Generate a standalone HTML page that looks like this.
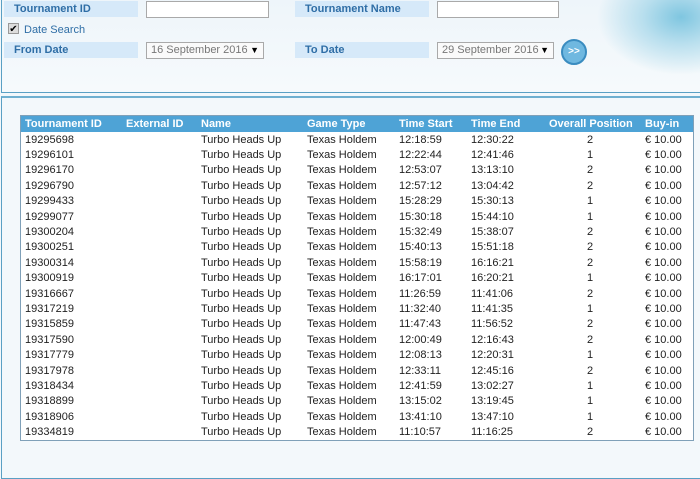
<!DOCTYPE html>
<html><head><style>
body{margin:0;width:700px;height:450px;overflow:hidden;background:#f3f8fb;font-family:"Liberation Sans",Arial,sans-serif;position:relative}
.a{position:absolute}
.top{left:1px;top:-2px;width:720px;height:93px;border:1px solid #5aa0c4;background:linear-gradient(#eef5fa,#f6fafc)}
.lab{position:absolute;height:16px;background:#d6e9f9;color:#2f6ea6;font-weight:bold;font-size:11px;line-height:16px;padding-left:10px;box-sizing:border-box}
.inp{position:absolute;height:17px;border:1px solid #a9a9a9;background:#fff;box-sizing:border-box}
.sel{position:absolute;height:17px;border:1px solid #a9a9a9;background:#fafafa;box-sizing:border-box;font-size:11px;color:#777;line-height:15px;padding-left:4px}
.sel span{position:absolute;right:4px;color:#000;font-size:9px}
.bot{left:1px;top:96px;width:720px;height:380px;border:1px solid #5aa0c4;border-top:2px solid #6fb0d0;background:#f3f8fb}
table{position:absolute;left:20px;top:115px;width:674px;border-collapse:collapse;font-size:11px;background:#fff;border:1px solid #7fa0b8}
th{background:#4ea3d6;color:#fff;text-align:left;height:16px;padding:0 0 0 4px;font-size:11px}
td{height:15.4px;padding:0 0 0 4px;color:#222;line-height:14px}
td:nth-child(7){text-align:center;padding-right:10px}
</style></head><body>
<div class="a top"></div>
<div class="a" style="left:590px;top:-10px;width:130px;height:90px;background:radial-gradient(ellipse at 70% 30%,#7fc6e0 0%,#b9dfee 30%,rgba(230,242,248,0) 65%)"></div>
<div class="lab" style="left:4px;top:1px;width:134px">Tournament ID</div>
<div class="inp" style="left:146px;top:1px;width:123px"></div>
<div class="lab" style="left:295px;top:1px;width:134px">Tournament Name</div>
<div class="inp" style="left:437px;top:1px;width:122px"></div>
<div class="a" style="left:8px;top:23px;width:11px;height:11px;border:1px solid #999;background:#ddd;font-size:10px;line-height:11px;text-align:center;box-sizing:border-box">✔</div>
<div class="a" style="left:24px;top:24px;font-size:11px;color:#2f6ea6">Date Search</div>
<div class="lab" style="left:4px;top:42px;width:134px">From Date</div>
<div class="sel" style="left:146px;top:42px;width:118px">16 September 2016<span>▼</span></div>
<div class="lab" style="left:295px;top:42px;width:134px">To Date</div>
<div class="sel" style="left:437px;top:42px;width:117px">29 September 2016<span>▼</span></div>
<div class="a" style="left:561px;top:39px;width:22px;height:22px;border-radius:50%;border:2px solid #3a8cc0;background:#6fb8e0;color:#fff;font-size:10px;font-weight:bold;text-align:center;line-height:22px">&gt;&gt;</div>
<div class="a bot"></div>
<table>
<tr><th style="width:97px">Tournament ID</th><th style="width:71px">External ID</th><th style="width:102px">Name</th><th style="width:88px">Game Type</th><th style="width:68px">Time Start</th><th style="width:74px">Time End</th><th style="width:92px">Overall Position</th><th>Buy-in</th></tr>
<tr><td>19295698</td><td></td><td>Turbo Heads Up</td><td>Texas Holdem</td><td>12:18:59</td><td>12:30:22</td><td>2</td><td>€ 10.00</td></tr>
<tr><td>19296101</td><td></td><td>Turbo Heads Up</td><td>Texas Holdem</td><td>12:22:44</td><td>12:41:46</td><td>1</td><td>€ 10.00</td></tr>
<tr><td>19296170</td><td></td><td>Turbo Heads Up</td><td>Texas Holdem</td><td>12:53:07</td><td>13:13:10</td><td>2</td><td>€ 10.00</td></tr>
<tr><td>19296790</td><td></td><td>Turbo Heads Up</td><td>Texas Holdem</td><td>12:57:12</td><td>13:04:42</td><td>2</td><td>€ 10.00</td></tr>
<tr><td>19299433</td><td></td><td>Turbo Heads Up</td><td>Texas Holdem</td><td>15:28:29</td><td>15:30:13</td><td>1</td><td>€ 10.00</td></tr>
<tr><td>19299077</td><td></td><td>Turbo Heads Up</td><td>Texas Holdem</td><td>15:30:18</td><td>15:44:10</td><td>1</td><td>€ 10.00</td></tr>
<tr><td>19300204</td><td></td><td>Turbo Heads Up</td><td>Texas Holdem</td><td>15:32:49</td><td>15:38:07</td><td>2</td><td>€ 10.00</td></tr>
<tr><td>19300251</td><td></td><td>Turbo Heads Up</td><td>Texas Holdem</td><td>15:40:13</td><td>15:51:18</td><td>2</td><td>€ 10.00</td></tr>
<tr><td>19300314</td><td></td><td>Turbo Heads Up</td><td>Texas Holdem</td><td>15:58:19</td><td>16:16:21</td><td>2</td><td>€ 10.00</td></tr>
<tr><td>19300919</td><td></td><td>Turbo Heads Up</td><td>Texas Holdem</td><td>16:17:01</td><td>16:20:21</td><td>1</td><td>€ 10.00</td></tr>
<tr><td>19316667</td><td></td><td>Turbo Heads Up</td><td>Texas Holdem</td><td>11:26:59</td><td>11:41:06</td><td>2</td><td>€ 10.00</td></tr>
<tr><td>19317219</td><td></td><td>Turbo Heads Up</td><td>Texas Holdem</td><td>11:32:40</td><td>11:41:35</td><td>1</td><td>€ 10.00</td></tr>
<tr><td>19315859</td><td></td><td>Turbo Heads Up</td><td>Texas Holdem</td><td>11:47:43</td><td>11:56:52</td><td>2</td><td>€ 10.00</td></tr>
<tr><td>19317590</td><td></td><td>Turbo Heads Up</td><td>Texas Holdem</td><td>12:00:49</td><td>12:16:43</td><td>2</td><td>€ 10.00</td></tr>
<tr><td>19317779</td><td></td><td>Turbo Heads Up</td><td>Texas Holdem</td><td>12:08:13</td><td>12:20:31</td><td>1</td><td>€ 10.00</td></tr>
<tr><td>19317978</td><td></td><td>Turbo Heads Up</td><td>Texas Holdem</td><td>12:33:11</td><td>12:45:16</td><td>2</td><td>€ 10.00</td></tr>
<tr><td>19318434</td><td></td><td>Turbo Heads Up</td><td>Texas Holdem</td><td>12:41:59</td><td>13:02:27</td><td>1</td><td>€ 10.00</td></tr>
<tr><td>19318899</td><td></td><td>Turbo Heads Up</td><td>Texas Holdem</td><td>13:15:02</td><td>13:19:45</td><td>1</td><td>€ 10.00</td></tr>
<tr><td>19318906</td><td></td><td>Turbo Heads Up</td><td>Texas Holdem</td><td>13:41:10</td><td>13:47:10</td><td>1</td><td>€ 10.00</td></tr>
<tr><td>19334819</td><td></td><td>Turbo Heads Up</td><td>Texas Holdem</td><td>11:10:57</td><td>11:16:25</td><td>2</td><td>€ 10.00</td></tr>
</table>
</body></html>
